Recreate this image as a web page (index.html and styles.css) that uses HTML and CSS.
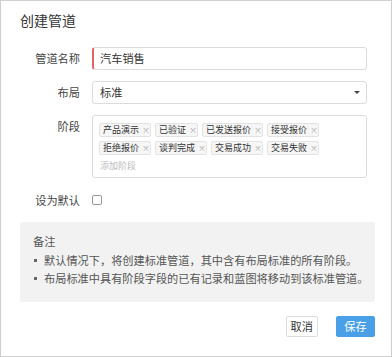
FILE: index.html
```html
<!DOCTYPE html>
<html lang="zh-CN">
<head>
  <meta charset="UTF-8">
  <meta name="viewport" content="width=device-width, initial-scale=1.0">
  <title>创建管道</title>
  <link rel="stylesheet" href="styles.css">
</head>
<body>
  <div class="dialog">
    <h1 class="title">创建管道</h1>

    <div class="form">
      <div class="row">
        <label class="row-label">管道名称</label>
        <div class="field input required">汽车销售</div>
      </div>
      <div class="row">
        <label class="row-label">布局</label>
        <div class="field input select">标准<span class="caret"></span></div>
      </div>
      <div class="row">
        <label class="row-label">阶段</label>
        <div class="field stages">
          <div class="tag-line">
            <span class="tag">产品演示<i>×</i></span>
            <span class="tag">已验证<i>×</i></span>
            <span class="tag">已发送报价<i>×</i></span>
            <span class="tag">接受报价<i>×</i></span>
          </div>
          <div class="tag-line">
            <span class="tag">拒绝报价<i>×</i></span>
            <span class="tag">谈判完成<i>×</i></span>
            <span class="tag">交易成功<i>×</i></span>
            <span class="tag">交易失败<i>×</i></span>
          </div>
          <div class="placeholder">添加阶段</div>
        </div>
      </div>
      <div class="row check-row">
        <label class="row-label">设为默认</label>
        <span class="checkbox"></span>
      </div>
    </div>

    <div class="notes">
      <div class="notes-title">备注</div>
      <ul>
        <li>默认情况下，将创建标准管道，其中含有布局标准的所有阶段。</li>
        <li>布局标准中具有阶段字段的已有记录和蓝图将移动到该标准管道。</li>
      </ul>
    </div>

    <div class="actions">
      <button class="btn">取消</button>
      <button class="btn primary">保存</button>
    </div>
  </div>
</body>
</html>
```
FILE: styles.css
```css
body {
  margin: 0;
  font-family: "Noto Sans CJK SC", "Noto Sans", sans-serif;
  color: #333;
  background: #fff;
}
.dialog {
  width: 392px;
  height: 357px;
  box-sizing: border-box;
  border: 1px solid #cfcfcf;
  background: #fff;
}
.title {
  margin: 0;
  padding: 10px 19px 0;
  font-size: 14px;
  line-height: 18px;
  font-weight: normal;
  color: #333;
}
.form {
  margin-top: 18px;
  padding: 0 24px 0 18px;
}
.row {
  display: flex;
  align-items: flex-start;
  margin-bottom: 11px;
}
.row-label {
  width: 61px;
  padding-right: 12px;
  text-align: right;
  font-size: 11.2px;
  line-height: 23px;
  color: #444;
  flex-shrink: 0;
}
.field {
  flex: 1;
  box-sizing: border-box;
  border: 1px solid #dcdcdc;
  border-radius: 3px;
  background: #fff;
}
.input {
  height: 23px;
  padding: 0 7px;
  font-size: 11.2px;
  line-height: 21px;
  color: #333;
  position: relative;
}
.required {
  border-left: 2px solid #e36464;
  padding-left: 6px;
}
.caret {
  position: absolute;
  right: 6px;
  top: 9px;
  border-left: 3px solid transparent;
  border-right: 3px solid transparent;
  border-top: 3px solid #444;
}
.stages {
  padding: 7px 6px 4px;
}
.tag-line {
  display: flex;
  gap: 4px;
  margin-bottom: 4px;
}
.tag {
  display: inline-flex;
  align-items: center;
  box-sizing: border-box;
  height: 14px;
  padding: 0 2px 0 3px;
  border: 1px solid #e3e3e3;
  border-radius: 2px;
  background: #f6f6f6;
  font-size: 9px;
  line-height: 12px;
  color: #333;
  white-space: nowrap;
}
.tag i {
  font-style: normal;
  color: #aaa;
  font-size: 8px;
  margin-left: 3px;
  width: 6px;
}
.placeholder {
  font-size: 9px;
  line-height: 14px;
  color: #bbb;
  padding-left: 1px;
}
.check-row .row-label {
  line-height: 22px;
}
.checkbox {
  width: 10px;
  height: 10px;
  margin-top: 6px;
  box-sizing: border-box;
  border: 1px solid #999;
  border-radius: 2px;
  background: #fff;
}
.notes {
  margin: 0 16px 0 19px;
  padding: 11px 8px 15px 13px;
  background: #f2f2f2;
  border-radius: 2px;
  color: #555;
  font-size: 11.2px;
}
.notes-title {
  line-height: 16px;
  margin-bottom: 2px;
}
.notes ul {
  list-style: none;
  margin: 0;
  padding: 0;
}
.notes li {
  line-height: 18px;
  display: flex;
  align-items: center;
  white-space: nowrap;
}
.notes li::before {
  content: "";
  width: 3px;
  height: 3px;
  background: #666;
  margin: 0 7px 0 1px;
  flex-shrink: 0;
}
.actions {
  display: flex;
  justify-content: flex-end;
  gap: 18px;
  margin-top: 14px;
  padding-right: 16px;
}
.btn {
  height: 21px;
  padding: 0 4px;
  box-sizing: border-box;
  border: 1px solid #dcdcdc;
  border-radius: 2px;
  background: #fff;
  color: #333;
  font-family: inherit;
  font-size: 11.2px;
  line-height: 19px;
  cursor: pointer;
}
.primary {
  width: 39px;
  border-color: #4aa0e6;
  background: #4aa0e6;
  color: #fff;
}
```
